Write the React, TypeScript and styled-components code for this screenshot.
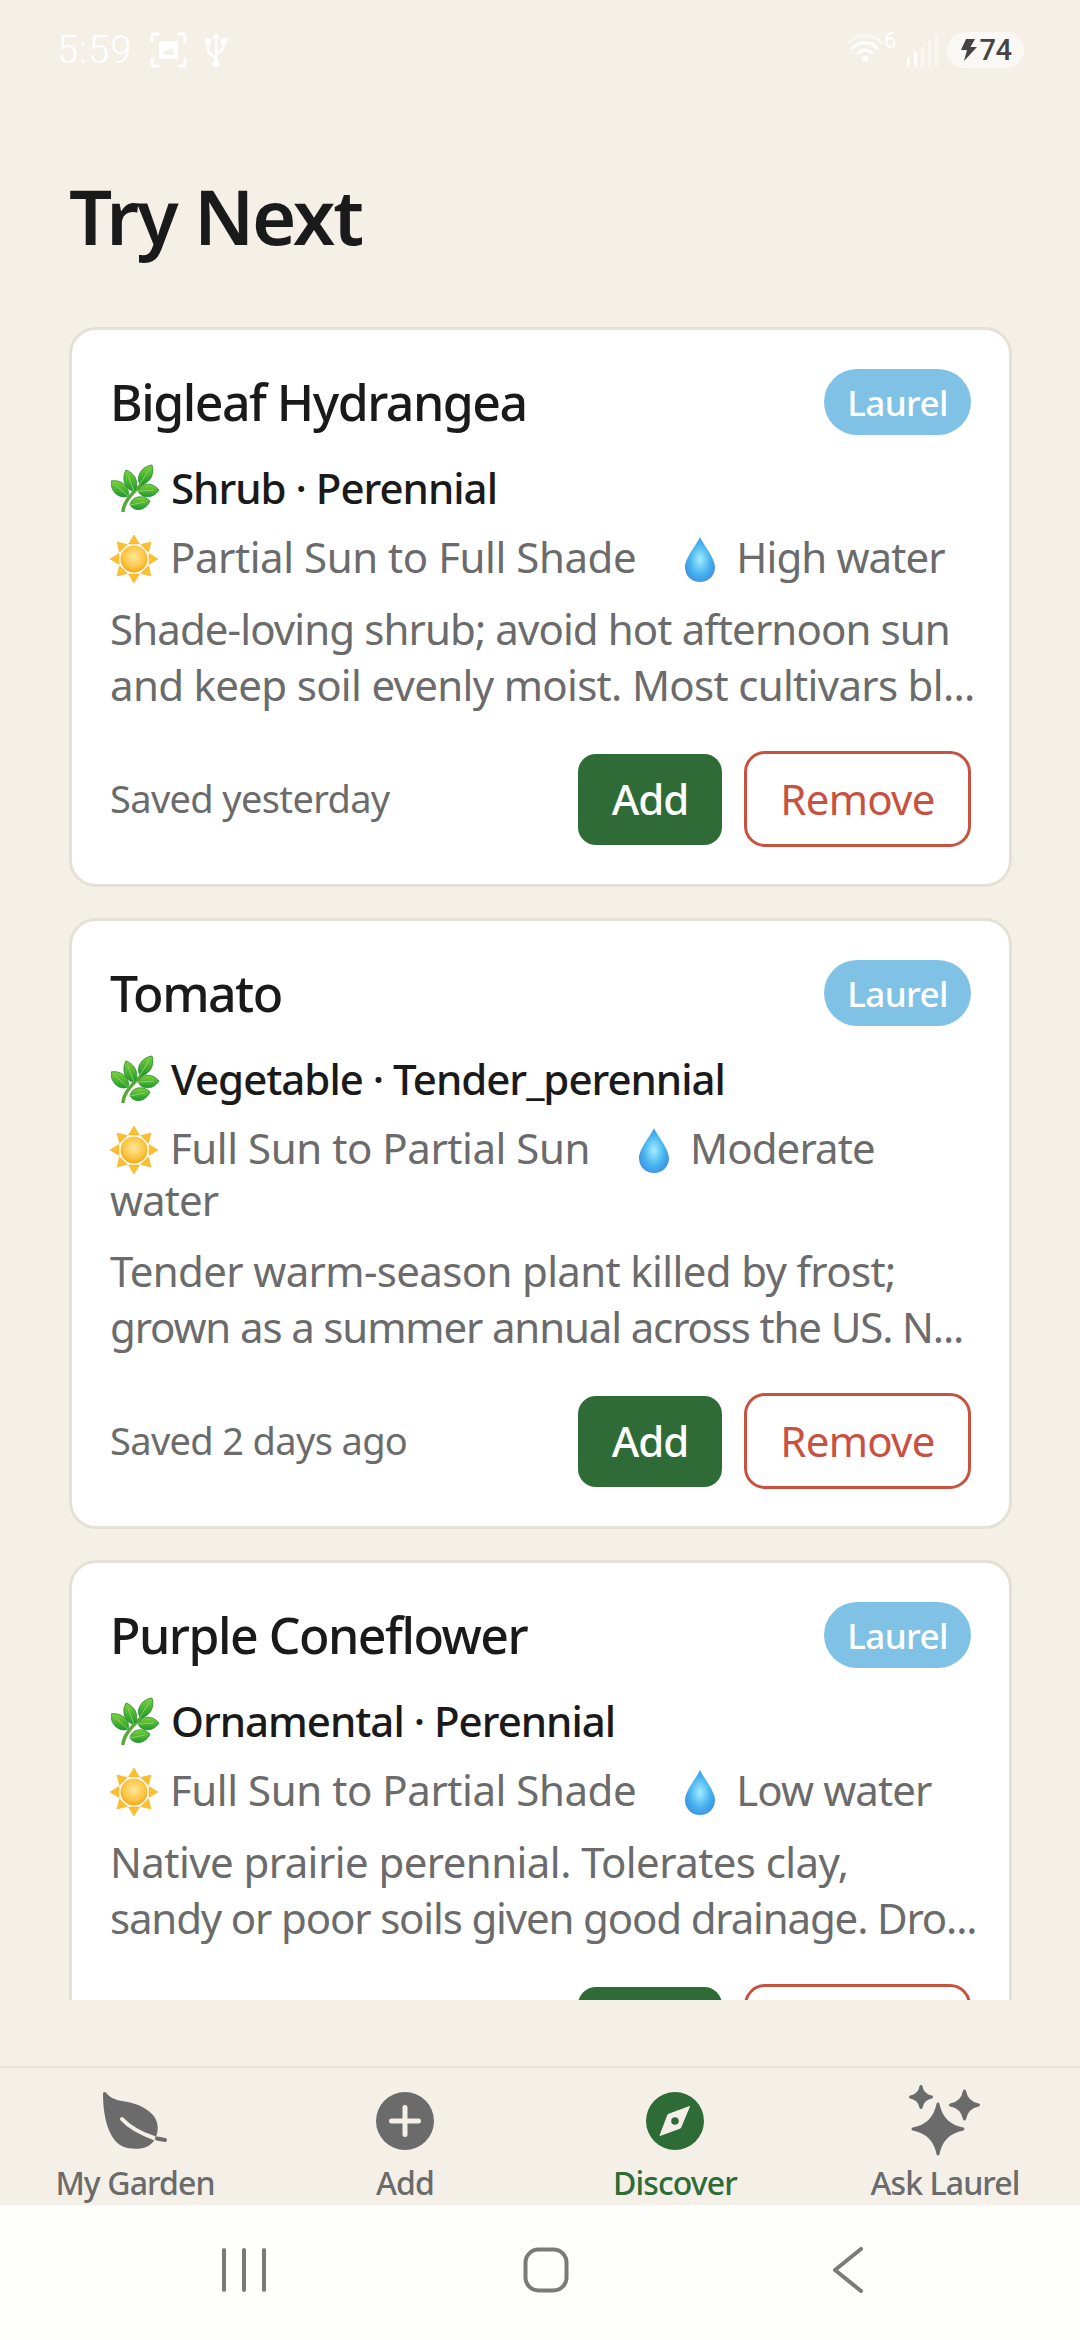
import React from "react";
import styled, { createGlobalStyle } from "styled-components";

const FONT = `"Noto Sans", "Open Sans", "Liberation Sans", sans-serif`;
const Global = createGlobalStyle`
  html, body { margin: 0; padding: 0; background: #f4f0e8; }
  * { box-sizing: border-box; }
  body { font-family: ${FONT}; }
`;

const Page = styled.div`
  width: 1080px; height: 2340px; background: #f4f0e8; display: flex; flex-direction: column; overflow: hidden;
`;
const StatusBar = styled.div`
  height: 100px; flex: none; display: flex; align-items: center; justify-content: space-between; padding: 0 56px 0 57px;
`;
const StatusGroup = styled.div<{ $gap: number }>`
  display: flex; align-items: center; gap: ${p => p.$gap}px;
`;
const Time = styled.span`
  font-family: Roboto, sans-serif; font-size: 38px; font-weight: 300; color: #fff; line-height: 36px; letter-spacing: 1px; margin-right: 1px;
`;
const Pill = styled.div`
  width: 77px; height: 36px; border-radius: 18px; background: #faf8f4; display: flex; align-items: center; justify-content: center; gap: 3px;
  font-family: Roboto, sans-serif; font-size: 29px; font-weight: 500; color: #444; letter-spacing: -0.5px; margin-left: -1px;
`;
const WifiWrap = styled.div`
  display: flex; align-items: flex-start; height: 36px;
`;
const Heading = styled.h1`
  margin: 0; padding: 71px 0 66px 69px; font-size: 76px; line-height: 90px; font-weight: 600; color: #1a1a1a; flex: none; letter-spacing: -2.2px;
`;
const Scroller = styled.div`
  height: 1673px; flex: none; overflow: hidden; padding: 0 68px 0 69px; display: flex; flex-direction: column; gap: 31px;
`;
const Card = styled.article`
  flex: none; background: #fff; border: 3px solid #e5e0d6; border-radius: 27px; padding: 39px 38px 37px;
`;
const CardHead = styled.div`
  display: flex; align-items: center; justify-content: space-between; height: 66px;
`;
const Name = styled.h2`
  margin: 0; font-size: 50px; line-height: 66px; font-weight: 500; color: #1a1a1a; letter-spacing: -1.5px;
`;
const Badge = styled.span`
  width: 147px; height: 66px; border-radius: 33px; background: #7fc2e6; color: #fff; font-size: 35px; font-weight: 500;
  display: flex; align-items: center; justify-content: center; letter-spacing: -0.6px;
`;
const Meta = styled.div`
  display: flex; align-items: center; gap: 13px; margin-top: 27px; height: 51px; font-size: 42px; font-weight: 500; color: #1a1a1a; letter-spacing: -1px; white-space: nowrap;
`;
const Care = styled.div`
  margin-top: 18px; font-size: 42px; line-height: 51px; color: #6b6b6b; letter-spacing: -0.45px;
`;
const WaterLabel = styled.span`
  letter-spacing: -0.9px;
`;
const Emoji = styled.svg<{ $lead?: number }>`
  width: 48px; height: 48px; flex: none; vertical-align: -10px; margin-left: ${p => p.$lead ?? 0}px; margin-right: 12px;
`;
const MetaEmoji = styled.svg`
  width: 48px; height: 48px; flex: none; margin-left: 1px; margin-right: -1px;
`;
const Desc = styled.div`
  margin-top: 18px; font-size: 42px; line-height: 56px; color: #6b6b6b;
`;
const DescLine = styled.div<{ $track: number }>`
  white-space: nowrap; letter-spacing: ${p => p.$track}px;
`;
const CardFoot = styled.div`
  margin-top: 38px; display: flex; align-items: center; height: 96px;
`;
const Saved = styled.span`
  flex: 1; font-size: 38px; color: #6b6b6b; letter-spacing: -0.65px; padding-bottom: 2px;
`;
const AddBtn = styled.button`
  width: 144px; height: 91px; border: 0; border-radius: 18px; background: #2f6b37; color: #fff; font: 500 42px ${FONT}; letter-spacing: -1px; padding: 0 0 2px;
`;
const RemoveBtn = styled.button`
  width: 227px; height: 96px; margin-left: 22px; border: 3px solid #c8513f; border-radius: 21px; background: #fff; color: #c8513f; font: 400 42px ${FONT}; letter-spacing: -0.7px; padding: 0 0 2px;
`;
const Spacer = styled.div`
  flex: 1;
`;
const TabBar = styled.nav`
  flex: none; height: 139px; border-top: 2px solid #e8e3da; padding-top: 15px; display: grid; grid-template-columns: repeat(4, 1fr);
`;
const Tab = styled.div<{ $active?: boolean }>`
  display: flex; flex-direction: column; align-items: center; color: ${p => (p.$active ? "#2f6b37" : "#6b6b6b")};
  font-size: 32px; font-weight: 500; line-height: 40px; letter-spacing: -0.9px;
`;
const TabIcon = styled.div`
  height: 76px; display: flex; align-items: center; justify-content: center; margin-bottom: 4px;
`;
const NavBar = styled.div`
  flex: none; height: 135px; background: #fefefc; display: flex; align-items: center; justify-content: center; padding: 0 0 6px 11px;
`;
const NavSlot = styled.div`
  width: 302px; display: flex; justify-content: center;
`;

const leaf = (x1: number, y1: number, x2: number, y2: number, w: number) => {
  const dx = x2 - x1, dy = y2 - y1;
  const nx = -dy, ny = dx, l = Math.hypot(dx, dy);
  const ox = (nx / l) * w, oy = (ny / l) * w;
  const a = (t: number, s: number) => `${(x1 + dx * t + ox * s).toFixed(1)} ${(y1 + dy * t + oy * s).toFixed(1)}`;
  return `M${x1} ${y1} C${a(0.15, 1)} ${a(0.7, 1.1)} ${x2} ${y2} C${a(0.7, -1.1)} ${a(0.15, -1)} ${x1} ${y1}Z`;
};
const LEAVES: [number, number, number, number, number][] = [
  [29, 20, 41, 1, 7.5],
  [23, 27, 15, 6, 7.5],
  [27, 27, 48, 26, 8],
  [17, 32, 0, 17, 8],
  [19, 41, 39, 37, 8],
];

const Herb = () => (
  <MetaEmoji viewBox="0 0 48 48" aria-hidden>
    <defs>
      <linearGradient id="hg" x1="0" y1="0" x2="0" y2="1">
        <stop offset="0" stopColor="#7fd13b" />
        <stop offset="1" stopColor="#1f9a2e" />
      </linearGradient>
    </defs>
    <path d="M12 47 C13 38 20 30 33 18" fill="none" stroke="#5aa83a" strokeWidth="3.4" strokeLinecap="round" />
    {LEAVES.map((l, i) => (
      <g key={i}>
        <path d={leaf(...l)} fill="url(#hg)" stroke="#1f8a2c" strokeWidth="0.8" />
        <path d={`M${l[0]} ${l[1]} L${l[0] + (l[2] - l[0]) * 0.75} ${l[1] + (l[3] - l[1]) * 0.75}`} stroke="#a5e06a" strokeWidth="0.9" opacity="0.8" />
      </g>
    ))}
  </MetaEmoji>
);

const Sun = () => (
  <Emoji viewBox="0 0 48 48" aria-hidden>
    <defs>
      <radialGradient id="sg" cx="0.5" cy="0.42" r="0.6">
        <stop offset="0" stopColor="#ffe79a" />
        <stop offset="0.65" stopColor="#fcc545" />
        <stop offset="1" stopColor="#f2a50f" />
      </radialGradient>
    </defs>
    {[0, 45, 90, 135, 180, 225, 270, 315].map(a => (
      <path key={a} d="M24 0 L29.5 9 L18.5 9Z" fill="#fbc02d" stroke="#f7a823" strokeWidth="0.5" transform={`rotate(${a} 24 24)`} />
    ))}
    <circle cx="24" cy="24" r="13.5" fill="url(#sg)" />
  </Emoji>
);

const Drop = () => (
  <Emoji $lead={40} viewBox="0 0 48 48" aria-hidden>
    <defs>
      <radialGradient id="dg" cx="0.5" cy="0.5" r="0.62">
        <stop offset="0" stopColor="#a5ecff" />
        <stop offset="0.55" stopColor="#45b3ee" />
        <stop offset="0.9" stopColor="#3f8fe3" />
        <stop offset="1" stopColor="#6a62dc" />
      </radialGradient>
    </defs>
    <path d="M24 2 C27 9 39 23 39 32 C39 41 32 47 24 47 C16 47 9 41 9 32 C9 23 21 9 24 2Z" fill="url(#dg)" />
  </Emoji>
);

const star = (cx: number, cy: number, rx: number, ry: number, k = 0.16) =>
  `M${cx} ${cy - ry} Q${cx + rx * k} ${cy - ry * k} ${cx + rx} ${cy} Q${cx + rx * k} ${cy + ry * k} ${cx} ${cy + ry} Q${cx - rx * k} ${cy + ry * k} ${cx - rx} ${cy} Q${cx - rx * k} ${cy - ry * k} ${cx} ${cy - ry}Z`;

const LeafIcon = () => (
  <svg width="70" height="62" viewBox="0 0 70 62" aria-hidden>
    <path d="M3 4 Q3 1 6 2.5 C9 7 14 9.5 22 11 C35 13 44 16 52 24 C59 31 60 43 53 52 C47 60 30 61 20 55 C8 47 3 25 3 4Z" fill="#6b6b6b" />
    <path d="M22 29 C30 38 40 43 54 48" fill="none" stroke="#f4f0e8" strokeWidth="4" strokeLinecap="round" />
    <path d="M57 48.5 L65 50" fill="none" stroke="#6b6b6b" strokeWidth="4" strokeLinecap="round" />
  </svg>
);
const AddIcon = () => (
  <svg width="58" height="58" viewBox="0 0 58 58" aria-hidden>
    <circle cx="29" cy="29" r="29" fill="#6b6b6b" />
    <path d="M15.5 29 H42.5 M29 15.5 V42.5" stroke="#f4f0e8" strokeWidth="5" strokeLinecap="round" />
  </svg>
);
const CompassIcon = () => (
  <svg width="58" height="58" viewBox="0 0 58 58" aria-hidden>
    <circle cx="29" cy="29" r="29" fill="#2f6b37" />
    <path d="M43.5 14.5 L34.5 36 L14 43.5 L22 22.5Z" fill="#f4f0e8" stroke="#f4f0e8" strokeWidth="1" strokeLinejoin="round" />
    <circle cx="29" cy="29" r="3.8" fill="#2f6b37" />
  </svg>
);
const SparkIcon = () => (
  <svg width="80" height="76" viewBox="0 0 80 76" aria-hidden>
    <g fill="#6b6b6b" stroke="#6b6b6b" strokeWidth="3" strokeLinejoin="round">
      <path d={star(33, 46, 25, 25)} />
      <path d={star(16, 14, 10.5, 10.5)} />
      <path d={star(59.5, 22, 14, 14)} />
    </g>
  </svg>
);

const ScreenshotIcon = () => (
  <svg width="37" height="36" viewBox="0 0 37 36" aria-hidden>
    <path d="M2 9 V4 Q2 2 4 2 H8 M29 2 H33 Q35 2 35 4 V9 M2 27 V32 Q2 34 4 34 H8 M29 34 H33 Q35 34 35 32 V27" fill="none" stroke="#fff" strokeWidth="3" strokeLinecap="round" />
    <path d="M10 9 H27 Q28 9 28 11 V26 Q28 27 27 27 H10 Q9 27 9 26 V11 Q9 9 10 9Z M13 23 H24 V20 L20.5 15 L18 19 L15.5 18 L13 21Z" fill="#fff" fillRule="evenodd" />
  </svg>
);
const UsbIcon = () => (
  <svg width="24" height="36" viewBox="0 0 24 36" aria-hidden>
    <path d="M12 6 V30 M12 26 C3 21 4 19 4 14 M12 22 C20 17 20 15 20 11" fill="none" stroke="#fff" strokeWidth="2.4" />
    <path d="M12 0 L16 7 H8Z M1.5 10 a2.8 2.8 0 1 0 5 0 a2.8 2.8 0 1 0 -5 0Z M17 6 H23 V12 H17Z" fill="#fff" />
    <circle cx="12" cy="32" r="3.4" fill="#fff" />
  </svg>
);
const WifiIcon = () => (
  <svg width="50" height="32" viewBox="0 0 50 32" aria-hidden>
    <g fill="none" strokeLinecap="round" strokeWidth="3">
      <path d="M2 11 C11 1 27 1 36 11" stroke="#fff" opacity="0.45" />
      <path d="M7 16 C13 9 25 9 31 16" stroke="#fff" />
      <path d="M12 21 C16 17 22 17 26 21" stroke="#fff" />
    </g>
    <circle cx="19" cy="27" r="3" fill="#fff" />
    <text x="38" y="16" fontFamily="Roboto, sans-serif" fontSize="22" fill="#fff">6</text>
  </svg>
);
const SignalIcon = () => (
  <svg width="32" height="34" viewBox="0 0 32 34" aria-hidden>
    <rect x="1" y="24" width="3" height="10" rx="1.5" fill="#fff" />
    <rect x="8" y="18" width="3" height="16" rx="1.5" fill="#fff" />
    <rect x="15" y="13" width="3" height="21" rx="1.5" fill="#fff" opacity="0.55" />
    <rect x="22" y="7" width="3" height="27" rx="1.5" fill="#fff" opacity="0.45" />
    <rect x="29" y="1" width="3" height="33" rx="1.5" fill="#fff" opacity="0.45" />
  </svg>
);
const BoltIcon = () => (
  <svg width="17" height="22" viewBox="0 0 17 22" aria-hidden>
    <path d="M6 0 H15 L10.5 8 H17 L4 22 L7 11 H1Z" fill="#444" />
  </svg>
);

type Plant = {
  name: string; meta: string; sun: string; water: string; lines: [string, number][]; saved: string;
};
const PLANTS: Plant[] = [
  {
    name: "Bigleaf Hydrangea", meta: "Shrub · Perennial", sun: "Partial Sun to Full Shade", water: "High water",
    lines: [["Shade-loving shrub; avoid hot afternoon sun", -0.9], ["and keep soil evenly moist. Most cultivars bl...", -0.68]], saved: "Saved yesterday",
  },
  {
    name: "Tomato", meta: "Vegetable · Tender_perennial", sun: "Full Sun to Partial Sun", water: "Moderate water",
    lines: [["Tender warm-season plant killed by frost;", -0.65], ["grown as a summer annual across the US. N...", -1.14]], saved: "Saved 2 days ago",
  },
  {
    name: "Purple Coneflower", meta: "Ornamental · Perennial", sun: "Full Sun to Partial Shade", water: "Low water",
    lines: [["Native prairie perennial. Tolerates clay,", -0.57], ["sandy or poor soils given good drainage. Dro...", -1.16]], saved: "",
  },
];

export default function App() {
  return (
    <Page>
      <Global />
      <StatusBar>
        <StatusGroup $gap={17}>
          <Time>5:59</Time>
          <ScreenshotIcon />
          <UsbIcon />
        </StatusGroup>
        <StatusGroup $gap={10}>
          <WifiWrap><WifiIcon /></WifiWrap>
          <SignalIcon />
          <Pill><BoltIcon />74</Pill>
        </StatusGroup>
      </StatusBar>
      <Heading>Try Next</Heading>
      <Scroller>
        {PLANTS.map(p => (
          <Card key={p.name}>
            <CardHead>
              <Name>{p.name}</Name>
              <Badge>Laurel</Badge>
            </CardHead>
            <Meta><Herb />{p.meta}</Meta>
            <Care><Sun />{p.sun}<Drop /><WaterLabel>{p.water}</WaterLabel></Care>
            <Desc>{p.lines.map(([text, track]) => <DescLine key={text} $track={track}>{text}</DescLine>)}</Desc>
            <CardFoot>
              <Saved>{p.saved}</Saved>
              <AddBtn>Add</AddBtn>
              <RemoveBtn>Remove</RemoveBtn>
            </CardFoot>
          </Card>
        ))}
      </Scroller>
      <Spacer />
      <TabBar>
        <Tab><TabIcon><LeafIcon /></TabIcon>My Garden</Tab>
        <Tab><TabIcon><AddIcon /></TabIcon>Add</Tab>
        <Tab $active><TabIcon><CompassIcon /></TabIcon>Discover</Tab>
        <Tab><TabIcon><SparkIcon /></TabIcon>Ask Laurel</Tab>
      </TabBar>
      <NavBar>
        <NavSlot>
          <svg width="44" height="44" viewBox="0 0 44 44" aria-hidden>
            <path d="M2 2 V42 M22 2 V42 M42 2 V42" stroke="#7a7a7a" strokeWidth="4" strokeLinecap="round" />
          </svg>
        </NavSlot>
        <NavSlot>
          <svg width="46" height="46" viewBox="0 0 46 46" aria-hidden>
            <rect x="2.5" y="2.5" width="41" height="41" rx="13" fill="none" stroke="#7a7a7a" strokeWidth="4" />
          </svg>
        </NavSlot>
        <NavSlot>
          <svg width="32" height="46" viewBox="0 0 32 46" aria-hidden>
            <path d="M29 2 L3 23 L29 44" fill="none" stroke="#7a7a7a" strokeWidth="4" strokeLinecap="round" strokeLinejoin="round" />
          </svg>
        </NavSlot>
      </NavBar>
    </Page>
  );
}
